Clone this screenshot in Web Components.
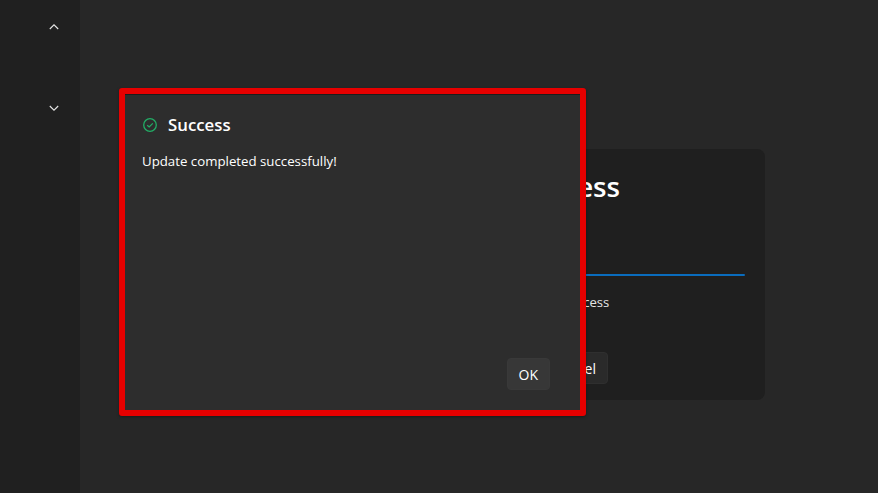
<!DOCTYPE html>
<html>
<head>
<meta charset="utf-8">
<title>Update</title>
<style>
  html, body { margin: 0; height: 100%; background: #272727; }
  body { font-family: "Open Sans", "Liberation Sans", sans-serif; color: #fff; overflow: hidden; }
</style>
</head>
<body>
<app-shell>
  <app-sidebar slot="side"></app-sidebar>
  <update-card></update-card>
  <success-dialog slot="over" heading="Success">
    Update completed successfully!
    <ui-button slot="actions" variant="raised">OK</ui-button>
  </success-dialog>
</app-shell>

<script>
(function () {
  class AppShell extends HTMLElement {
    connectedCallback() {
      this.attachShadow({mode: "open"}).innerHTML = `
        <style>
          :host { display: flex; position: relative; width: 878px; height: 493px; overflow: hidden; }
          main { flex: 1; display: flex; justify-content: center; align-items: flex-start; padding-top: 149px; box-sizing: border-box; }
        </style>
        <slot name="side"></slot>
        <main><slot></slot></main>
        <slot name="over"></slot>
      `;
    }
  }

  class AppSidebar extends HTMLElement {
    connectedCallback() {
      this.attachShadow({mode: "open"}).innerHTML = `
        <style>
          :host { display: flex; flex-direction: column; align-items: flex-start; width: 80px; height: 493px; flex: none; background: #202020; box-sizing: border-box; padding: 22px 0 0 49px; gap: 71px; }
          svg { display: block; width: 10px; height: 10px; fill: none; stroke: #e6e6e6; stroke-width: 1.1; }
        </style>
        <svg viewBox="0 0 10 10"><path d="M0.8 7 L5 2.8 L9.2 7"/></svg>
        <svg viewBox="0 0 10 10"><path d="M0.8 3 L5 7.2 L9.2 3"/></svg>
      `;
    }
  }

  class UiButton extends HTMLElement {
    connectedCallback() {
      this.attachShadow({mode: "open"}).innerHTML = `
        <style>
          :host { display: inline-flex; align-items: center; justify-content: center; height: 32px; box-sizing: border-box; padding: 0 11px; border-radius: 4px; font-size: 14px; color: #fff; background: #2a2a2a; border: 1px solid #2f2f2f; }
          :host([variant="raised"]) { background: #373737; border-color: #393939; }
        </style>
        <slot></slot>
      `;
    }
  }

  class UpdateCard extends HTMLElement {
    connectedCallback() {
      this.attachShadow({mode: "open"}).innerHTML = `
        <style>
          :host { display: flex; flex-direction: column; align-items: center; box-sizing: border-box; width: 572px; height: 251px; padding: 20px; background: #1f1f1f; border-radius: 8px; }
          h1 { margin: -2px 0 2px; font-size: 27.7px; line-height: 38px; font-weight: 600; white-space: nowrap; }
          .bar { align-self: stretch; height: 2px; margin-top: 67px; background: #0a6cbd; flex: none; border-radius: 1px; }
          p { margin: 16px 0 0; font-size: 13.1px; line-height: 20px; color: #e4e4e4; white-space: nowrap; }
          .row { display: flex; gap: 12px; margin-top: 40px; }
        </style>
        <h1>Update is in Progress</h1>
        <div class="bar"></div>
        <p>Please wait, installing an update in process</p>
        <div class="row"><ui-button>Run in background now</ui-button><ui-button>Cancel</ui-button></div>
      `;
    }
  }

  class SuccessDialog extends HTMLElement {
    connectedCallback() {
      this.attachShadow({mode: "open"}).innerHTML = `
        <style>
          :host { display: flex; flex-direction: column; position: absolute; left: 119px; top: 88px; width: 467px; height: 328px; box-sizing: border-box; border: 6px solid #e60000; border-radius: 3px; background: #2d2d2d; box-shadow: inset 0 1px 0 #1c1c1c, 0 1px 3px rgba(0,0,0,.35); padding: 20px 30px 20px 17px; }
          header { display: flex; align-items: center; gap: 10px; height: 22px; }
          svg { width: 16px; height: 16px; flex: none; fill: none; stroke: #22ad66; }
          h2 { margin: 0; font-size: 16.8px; line-height: 22px; font-weight: 600; }
          .body { margin-top: 15px; font-size: 13.25px; line-height: 20px; color: #fff; flex: 1; }
          .actions { display: flex; justify-content: flex-end; }
        </style>
        <header>
          <svg viewBox="0 0 16 16"><circle cx="8" cy="8" r="6.3" stroke-width="1.3"/><path d="M5.2 8.2 L7.2 10 L10.8 6.3" stroke-width="1.2"/></svg>
          <h2>${this.getAttribute('heading')}</h2>
        </header>
        <div class="body"><slot></slot></div>
        <div class="actions"><slot name="actions"></slot></div>
      `;
    }
  }

  customElements.define('app-shell', AppShell);
  customElements.define('app-sidebar', AppSidebar);
  customElements.define('ui-button', UiButton);
  customElements.define('update-card', UpdateCard);
  customElements.define('success-dialog', SuccessDialog);
})();
</script>
</body>
</html>
